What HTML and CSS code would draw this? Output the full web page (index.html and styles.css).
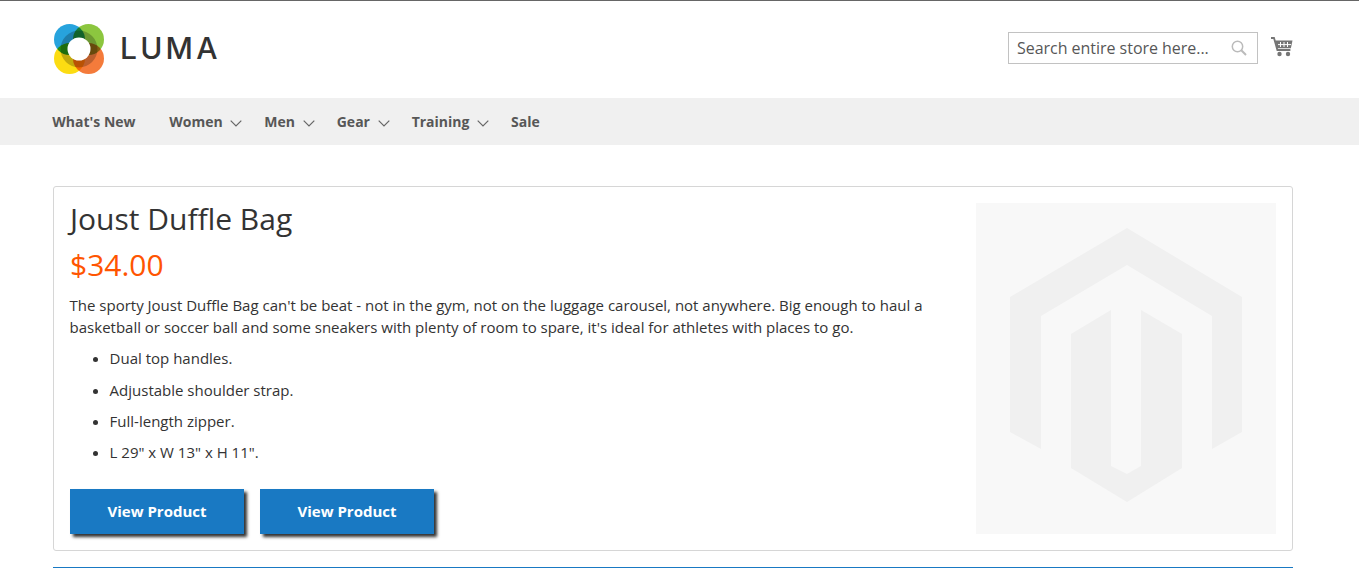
FILE: index.html
```html
<!DOCTYPE html>
<html lang="en">
<head>
<meta charset="utf-8">
<title>Joust Duffle Bag</title>
<link rel="stylesheet" href="styles.css">
</head>
<body>
<header class="header">
  <a class="logo" href="#">
    <svg class="logo-mark" width="50" height="50" viewBox="0 0 50 50" aria-hidden="true">
      <circle class="blend" cx="15.5" cy="15.5" r="15.5" fill="#27a3dd"/>
      <circle class="blend" cx="34.5" cy="15.5" r="15.5" fill="#8cc63f"/>
      <circle class="blend" cx="15.5" cy="34.5" r="15.5" fill="#fcdc12"/>
      <circle class="blend" cx="34.5" cy="34.5" r="15.5" fill="#f47b3b"/>
      <circle class="blend" cx="25" cy="25" r="18.5" fill="#c4c4c4"/>
      <circle cx="25" cy="25" r="11.5" fill="#fff"/>
    </svg>
    <span class="logo-text">LUMA</span>
  </a>
  <div class="tools">
    <div class="search">
      <span class="search-text">Search entire store here...</span>
      <svg class="search-icon" width="16" height="16" viewBox="0 0 16 16" aria-hidden="true">
        <circle cx="6.5" cy="6.5" r="5.2" fill="none" stroke="#bbb" stroke-width="1.5"/>
        <path d="M10.3 10.3 15 15" stroke="#bbb" stroke-width="2" fill="none"/>
      </svg>
    </div>
    <svg class="cart" width="22" height="20" viewBox="0 0 22 20" aria-hidden="true">
      <path d="M0 1h3l3.4 12h13" fill="none" stroke="#757575" stroke-width="1.8"/>
      <path d="M4.2 3.6H21.5l-1.6 7.6H6.2Z" fill="#757575"/>
      <path d="M9.5 5v5M13 5v5M16.5 5v5M7 7.6h13" stroke="#fff" stroke-width="1" fill="none"/>
      <circle cx="8.5" cy="17" r="2.2" fill="#757575"/>
      <circle cx="17" cy="17" r="2.2" fill="#757575"/>
    </svg>
  </div>
</header>
<nav class="nav">
  <a class="nav-item">What's New</a>
  <a class="nav-item has-sub">Women<svg class="chev" width="12" height="7" viewBox="0 0 12 7"><path d="M.7.7 6 6l5.3-5.3" fill="none" stroke="#666" stroke-width="1.2"/></svg></a>
  <a class="nav-item has-sub">Men<svg class="chev" width="12" height="7" viewBox="0 0 12 7"><path d="M.7.7 6 6l5.3-5.3" fill="none" stroke="#666" stroke-width="1.2"/></svg></a>
  <a class="nav-item has-sub">Gear<svg class="chev" width="12" height="7" viewBox="0 0 12 7"><path d="M.7.7 6 6l5.3-5.3" fill="none" stroke="#666" stroke-width="1.2"/></svg></a>
  <a class="nav-item has-sub">Training<svg class="chev" width="12" height="7" viewBox="0 0 12 7"><path d="M.7.7 6 6l5.3-5.3" fill="none" stroke="#666" stroke-width="1.2"/></svg></a>
  <a class="nav-item">Sale</a>
</nav>
<main class="main">
  <section class="card">
    <div class="info">
      <h1 class="title">Joust Duffle Bag</h1>
      <div class="price">$34.00</div>
      <p class="desc">The sporty Joust Duffle Bag can't be beat - not in the gym, not on the luggage carousel, not anywhere. Big enough to haul a basketball or soccer ball and some sneakers with plenty of room to spare, it's ideal for athletes with places to go.</p>
      <ul class="features">
        <li>Dual top handles.</li>
        <li>Adjustable shoulder strap.</li>
        <li>Full-length zipper.</li>
        <li>L 29" x W 13" x H 11".</li>
      </ul>
      <div class="actions">
        <a class="btn">View Product</a>
        <a class="btn">View Product</a>
      </div>
    </div>
    <div class="photo">
      <svg width="300" height="331" viewBox="976 203 300 331" aria-hidden="true">
        <path fill="#f0f0f0" d="M1127 228 1242 297V432L1212 449V316L1127 265 1041 316V449L1010 432V297Z"/>
        <path fill="#f0f0f0" d="M1071 334 1111 310V466L1127 474 1141 466V310L1182 334V468L1127 502 1071 468Z"/>
      </svg>
    </div>
  </section>
  <hr class="rule">
</main>
</body>
</html>
```
FILE: styles.css
```css
* { box-sizing: border-box; }
html, body { margin: 0; padding: 0; }
body {
  height: 568px;
  overflow: hidden;
  background: #fff;
  color: #333;
  font-family: "Open Sans", sans-serif;
  font-size: 15px;
  border-top: 1px solid #666;
}
.header {
  height: 97px;
  padding: 0 66px 0 54px;
  display: flex;
  justify-content: space-between;
}
.logo {
  display: flex;
  align-items: center;
  gap: 16px;
  height: 50px;
  margin-top: 23px;
  text-decoration: none;
}
.blend { mix-blend-mode: multiply; }
.logo-mark { isolation: isolate; }
.logo-text {
  font-family: Inter, sans-serif;
  font-size: 30px;
  font-weight: 500;
  letter-spacing: 3.2px;
  color: #333;
  line-height: 1;
  margin-top: -3px;
}
.tools {
  display: flex;
  align-items: flex-start;
  gap: 13px;
  padding-top: 31px;
}
.search {
  width: 250px;
  height: 32px;
  border: 1px solid #c2c2c2;
  padding: 0 10px 0 8px;
  display: flex;
  align-items: center;
  justify-content: space-between;
}
.search-text { font-size: 16px; color: #575757; letter-spacing: -0.03px; }
.cart { margin-top: 5px; }
.nav {
  height: 47px;
  background: #f0f0f0;
  padding-left: 52.3px;
  display: flex;
  align-items: center;
}
.nav-item {
  font-size: 14px;
  font-weight: 700;
  color: #575757;
  margin-right: 33.7px;
  display: flex;
  align-items: center;
}
.nav-item.has-sub { margin-right: 22.1px; }
.chev { margin-left: 7.6px; margin-top: 3px; }
.main { padding: 41px 66px 0 53px; }
.card {
  height: 365px;
  border: 1px solid #d6d6d6;
  border-radius: 3px;
  padding: 16px;
  display: flex;
  justify-content: space-between;
}
.info { width: 860px; margin-top: -2px; }
.title {
  margin: 0;
  font-size: 30px;
  font-weight: 400;
  line-height: 36px;
  color: #333;
}
.price {
  margin-top: 8px;
  font-size: 30px;
  line-height: 40px;
  color: #ff5501;
}
.desc { margin: 9px 0 0 -0.4px; line-height: 22px; letter-spacing: -0.005px; }
.features { margin: 9.4px 0 0 -0.4px; padding: 0 0 0 40px; line-height: 22px; }
.features li { margin-bottom: 9.2px; }
.actions { display: flex; gap: 16px; margin-top: 26px; }
.btn {
  width: 174px;
  height: 45px;
  background: #1979c3;
  color: #fff;
  font-weight: 700;
  font-size: 15px;
  display: flex;
  align-items: center;
  justify-content: center;
  box-shadow: 3px 3px 3px #333;
}
.photo { width: 300px; height: 331px; background: #f8f8f8; flex: none; }
.photo svg { display: block; }
.rule { margin: 16px 0 0; border: 0; border-top: 1px solid #1979c3; }
```
